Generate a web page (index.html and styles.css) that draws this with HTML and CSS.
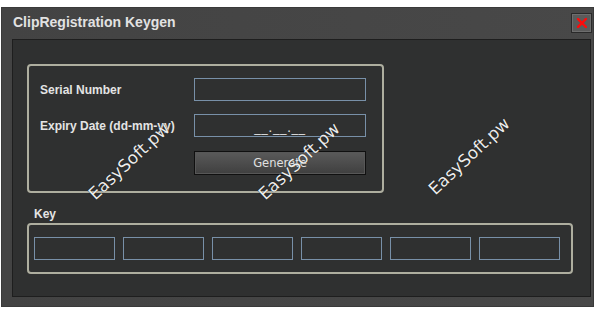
FILE: index.html
```html
<!DOCTYPE html>
<html lang="en">
<head>
    <meta charset="UTF-8">
    <meta name="viewport" content="width=device-width, initial-scale=1.0">
    <title>ClipRegistration Keygen</title>
    <link rel="stylesheet" href="styles.css">
</head>
<body>
    <div class="window">
        <div class="titlebar">
            <h1>ClipRegistration Keygen</h1>
            <button class="close" title="Close">
                <svg width="10" height="10" viewBox="0 0 10 10">
                    <path d="M1 1 L9 9 M9 1 L1 9" stroke="#ff0a0a" stroke-width="2.4" stroke-linecap="square"/>
                </svg>
            </button>
        </div>

        <div class="panel">
            <div class="group form-group">
                <label for="serial">Serial Number</label>
                <input type="text" id="serial">
                <label for="expiry">Expiry Date (dd-mm-yy)</label>
                <input type="text" id="expiry" value="__.__.__">
                <span></span>
                <button class="generate">Generate</button>
            </div>

            <div class="key-title">Key</div>
            <div class="group key-group">
                <input type="text" class="key-field">
                <input type="text" class="key-field">
                <input type="text" class="key-field">
                <input type="text" class="key-field">
                <input type="text" class="key-field">
                <input type="text" class="key-field">
            </div>

            <!-- watermark -->
            <span class="mark mark-1">EasySoft.pw</span>
            <span class="mark mark-2">EasySoft.pw</span>
            <span class="mark mark-3">EasySoft.pw</span>
        </div>
    </div>
</body>
</html>
```

FILE: styles.css
```css
body {
    margin: 0;
    padding: 0;
    background-color: #fff;
    font-family: "Liberation Sans", Arial, sans-serif;
}

.window {
    margin: 7px 0 0 1px;
    width: 593px;
    height: 300px;
    background: linear-gradient(90deg, #434343, #484848);
    box-shadow: inset 0 0 0 1px #3a3a3a;
}

.titlebar {
    height: 32px;
    display: flex;
    align-items: center;
    justify-content: space-between;
}

.titlebar h1 {
    margin: 0 0 2px 12px;
    font-size: 14px;
    font-weight: bold;
    color: #e2e2e2;
}

.close {
    width: 21px;
    height: 20px;
    margin: 0 2px 0 0;
    padding: 0;
    background-color: #5b5b5b;
    border: 1px solid #2a2a2a;
    box-shadow: inset 0 0 0 1px #6e6e6e;
    display: flex;
    align-items: center;
    justify-content: center;
}

.panel {
    position: relative;
    margin: 0 3px 0 11px;
    height: 258px;
    background-color: #2f3030;
    border: 1px solid #1e1e1e;
    padding: 24px 0 0 14px;
    box-sizing: border-box;
}

.group {
    border: 2px solid #aeae9f;
    border-radius: 4px;
    box-sizing: border-box;
}

.form-group {
    width: 357px;
    height: 129px;
    display: grid;
    grid-template-columns: 154px 172px;
    grid-auto-rows: 23px;
    row-gap: 13px;
    align-items: center;
    padding: 12px 0 0 11px;
}

.form-group label {
    font-size: 12px;
    font-weight: bold;
    color: #e4e4e4;
}

input[type="text"] {
    height: 23px;
    box-sizing: border-box;
    background-color: #2f3030;
    border: 1px solid #7890a8;
    margin: 0;
    padding: 0;
    color: #e0e0e0;
    font-family: "DejaVu Sans", sans-serif;
    font-size: 11px;
    outline: none;
}

#expiry {
    text-align: center;
    padding-top: 3px;
    font-size: 13px;
    letter-spacing: 0.5px;
}

.generate {
    grid-row: 3;
    grid-column: 2;
    margin-top: 2px;
    height: 24px;
    background: linear-gradient(#5a5a5a, #3f3f3f);
    border: 1px solid #101010;
    box-shadow: inset 0 0 0 1px #575757;
    color: #e0e0e0;
    font-family: "DejaVu Sans", sans-serif;
    font-size: 11.5px;
    padding: 0;
}

.key-title {
    margin: 14px 0 0 7px;
    font-size: 12px;
    font-weight: bold;
    color: #e4e4e4;
}

.key-group {
    margin-top: 2px;
    width: 546px;
    height: 51px;
    display: flex;
    gap: 8px;
    padding: 12px 0 0 5px;
}

.key-field {
    width: 81px;
}

.mark {
    position: absolute;
    font-family: "DejaVu Sans", sans-serif;
    font-size: 17px;
    color: #ececec;
    text-shadow: 0 0 1px #000;
    transform: translate(-50%, -50%) rotate(-43deg);
    white-space: nowrap;
    pointer-events: none;
}

.mark-1 {
    left: 116px;
    top: 121px;
}

.mark-2 {
    left: 286px;
    top: 121px;
}

.mark-3 {
    left: 456px;
    top: 116px;
}
```
